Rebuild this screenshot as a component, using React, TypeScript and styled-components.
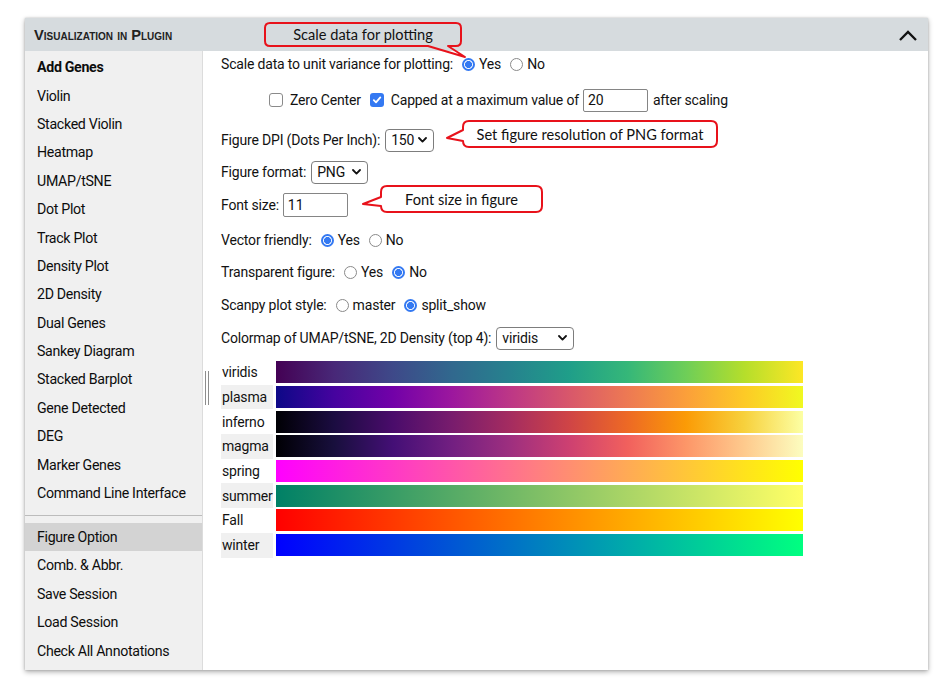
import React from 'react';
import styled, { createGlobalStyle } from 'styled-components';

const Global = createGlobalStyle`
  html, body { margin: 0; padding: 0; background: #ffffff; }
  body { font-family: Roboto, "Liberation Sans", Arial, sans-serif; color: #1b1b1b; }
  * { box-sizing: border-box; }
`;

const Page = styled.div`
  position: relative;
  width: 945px;
  height: 682px;
  padding: 18px 0 0 25px;
`;

const Panel = styled.section`
  width: 903px;
  height: 652px;
  display: flex;
  flex-direction: column;
  background: #fff;
  box-shadow: 0 2px 5px rgba(0, 0, 0, 0.32), 0 0 2px rgba(0, 0, 0, 0.18);
`;

const Header = styled.header`
  flex: none;
  height: 33px;
  background: #d6dbde;
  display: flex;
  align-items: center;
  justify-content: space-between;
  padding: 0 10px 0 9px;
`;

const Title = styled.h2`
  margin: 0;
  font-family: "Liberation Sans", Arial, sans-serif;
  font-weight: bold;
  font-variant: small-caps;
  font-size: 14.7px;
  color: #222;
  letter-spacing: 0;
`;

const Body = styled.div`
  flex: 1;
  display: flex;
  min-height: 0;
`;

const Sidebar = styled.nav`
  flex: none;
  width: 178px;
  background: #f0f0f0;
  border-right: 1px solid #dcdcdc;
  padding-top: 2px;
  display: flex;
  flex-direction: column;
`;

const NavItem = styled.div<{ $active?: boolean; $bold?: boolean }>`
  height: 28.4px;
  display: flex;
  align-items: center;
  padding-left: 12px;
  font-size: 14.2px;
  font-weight: ${p => (p.$bold ? 700 : 400)};
  letter-spacing: -0.32px;
  color: #0d0d0d;
  background: ${p => (p.$active ? '#d3d3d3' : 'transparent')};
`;

const Separator = styled.hr`
  margin: 7.6px 0 7px;
  border: 0;
  height: 1px;
  background: #bcbcbc;
`;

const Main = styled.main`
  position: relative;
  flex: 1;
  padding-left: 18px;
  font-size: 14px;
  letter-spacing: -0.18px;
  color: #121212;
`;

const Grip = styled.div`
  position: absolute;
  left: 2px;
  top: 320px;
  width: 4px;
  height: 34px;
  border-left: 1px solid #8d8d8d;
  border-right: 1px solid #8d8d8d;
`;

const Row = styled.div<{ $mt?: number; $indent?: number }>`
  height: 26px;
  display: flex;
  align-items: center;
  white-space: nowrap;
  margin-top: ${p => p.$mt ?? 0}px;
  padding-left: ${p => p.$indent ?? 0}px;
`;

const Choice = styled.label`
  display: inline-flex;
  align-items: center;
  margin-left: 9px;
`;

const Radio = styled.span<{ $on?: boolean }>`
  display: inline-block;
  width: 13px;
  height: 13px;
  border-radius: 50%;
  margin-right: 4px;
  border: ${p => (p.$on ? '2px solid #3479f2' : '1px solid #8a8a8a')};
  background: ${p =>
    p.$on ? 'radial-gradient(circle, #3479f2 0 3.2px, #ffffff 3.8px)' : '#ffffff'};
`;

const Check = styled.span<{ $on?: boolean }>`
  display: inline-flex;
  align-items: center;
  justify-content: center;
  width: 14px;
  height: 14px;
  border-radius: 3px;
  margin-right: 7px;
  border: ${p => (p.$on ? 'none' : '1px solid #8a8a8a')};
  background: ${p => (p.$on ? '#3479f2' : '#ffffff')};
`;

const Gap = styled.span<{ $w: number }>`
  display: inline-block;
  width: ${p => p.$w}px;
`;

const TextInput = styled.input<{ $w: number; $h: number }>`
  width: ${p => p.$w}px;
  height: ${p => p.$h}px;
  margin: 0 5px 0 4px;
  padding: 0 4px;
  border: 1px solid #858585;
  border-radius: 2px;
  font-family: Roboto, "Liberation Sans", Arial, sans-serif;
  font-size: 14px;
  color: #111;
  background: #fff;
  outline: none;
`;

const SelectBox = styled.div<{ $w: number }>`
  display: inline-flex;
  align-items: center;
  justify-content: space-between;
  width: ${p => p.$w}px;
  height: 23px;
  margin-left: 5px;
  padding: 0 6px 0 5px;
  border: 1px solid #7d7d7d;
  border-radius: 4px;
  background: #fff;
  color: #111;
`;

const ColorTable = styled.div`
  margin-top: 9px;
  display: grid;
  grid-template-columns: 52px 527px;
  grid-auto-rows: 24.7px;
  column-gap: 3px;
`;

const MapLabel = styled.div<{ $shade: boolean }>`
  display: flex;
  align-items: center;
  padding-left: 1px;
  background: ${p => (p.$shade ? '#f0f0f0' : 'transparent')};
`;

const MapBar = styled.div<{ $g: string }>`
  align-self: center;
  height: 22px;
  background: ${p => p.$g};
`;

const CalloutWrap = styled.div<{ $x: number; $y: number; $w: number; $h: number }>`
  position: absolute;
  left: ${p => p.$x}px;
  top: ${p => p.$y}px;
  width: ${p => p.$w}px;
  height: ${p => p.$h}px;
  display: flex;
  align-items: center;
  justify-content: center;
  font-family: Lato, "Open Sans", sans-serif;
  font-size: 14.6px;
  color: #111;
  z-index: 5;
`;

const CalloutShape = styled.svg`
  position: absolute;
  left: 0;
  top: 0;
  overflow: visible;
`;

const CalloutText = styled.span`
  position: relative;
`;

const Chevron = () => (
  <svg width="9" height="6" viewBox="0 0 9 6">
    <polyline points="1,1 4.5,4.6 8,1" fill="none" stroke="#111" strokeWidth="1.8" strokeLinecap="round" strokeLinejoin="round" />
  </svg>
);

const CheckMark = () => (
  <svg width="10" height="10" viewBox="0 0 10 10">
    <polyline points="1.8,5.2 4,7.4 8.3,2.4" fill="none" stroke="#fff" strokeWidth="1.8" strokeLinecap="round" strokeLinejoin="round" />
  </svg>
);

const Callout = ({ x, y, w, h, d, fill, text }: { x: number; y: number; w: number; h: number; d: string; fill: string; text: string }) => (
  <CalloutWrap $x={x} $y={y} $w={w} $h={h}>
    <CalloutShape width={w} height={h}>
      <path d={d} fill={fill} stroke="#e8121b" strokeWidth="2" strokeLinejoin="round" />
    </CalloutShape>
    <CalloutText>{text}</CalloutText>
  </CalloutWrap>
);

const navTop = [
  'Add Genes', 'Violin', 'Stacked Violin', 'Heatmap', 'UMAP/tSNE', 'Dot Plot', 'Track Plot',
  'Density Plot', '2D Density', 'Dual Genes', 'Sankey Diagram', 'Stacked Barplot',
  'Gene Detected', 'DEG', 'Marker Genes', 'Command Line Interface',
];
const navBottom = ['Figure Option', 'Comb. & Abbr.', 'Save Session', 'Load Session', 'Check All Annotations'];

const lg = (stops: string[]) => `linear-gradient(to right, ${stops.join(', ')})`;

const colormaps = [
  { name: 'viridis', g: lg(['#440154', '#482878', '#3e4989', '#31688e', '#26828e', '#1f9e89', '#35b779', '#6ece58', '#b5de2b', '#fde725']) },
  { name: 'plasma', g: lg(['#0d0887', '#46039f', '#7201a8', '#9c179e', '#bd3786', '#d8576b', '#ed7953', '#fb9f3a', '#fdca26', '#f0f921']) },
  { name: 'inferno', g: lg(['#000004', '#1b0c41', '#4a0c6b', '#781c6d', '#a52c60', '#cf4446', '#ed6925', '#fb9b06', '#f7d13d', '#fcffa4']) },
  { name: 'magma', g: lg(['#000004', '#180f3d', '#440f76', '#721f81', '#9e2f7f', '#cd4071', '#f1605d', '#fd9668', '#feca8d', '#fcfdbf']) },
  { name: 'spring', g: lg(['#ff00ff', '#ffff00']) },
  { name: 'summer', g: lg(['#008066', '#ffff66']) },
  { name: 'Fall', g: lg(['#ff0000', '#ffff00']) },
  { name: 'winter', g: lg(['#0000ff', '#00ff80']) },
];

export default function App() {
  return (
    <Page>
      <Global />
      <Panel>
        <Header>
          <Title>Visualization in Plugin</Title>
          <svg width="20" height="12" viewBox="0 0 20 12">
            <polyline points="2,11 10,3 18,11" fill="none" stroke="#111" strokeWidth="2.3" />
          </svg>
        </Header>
        <Body>
          <Sidebar>
            {navTop.map((n, i) => (
              <NavItem key={n} $bold={i === 0}>{n}</NavItem>
            ))}
            <Separator />
            {navBottom.map((n, i) => (
              <NavItem key={n} $active={i === 0}>{n}</NavItem>
            ))}
          </Sidebar>
          <Main>
            <Grip />
            <Row>
              Scale data to unit variance for plotting:
              <Choice><Radio $on />Yes</Choice>
              <Choice><Radio />No</Choice>
            </Row>
            <Row $mt={10} $indent={48}>
              <Check />Zero Center<Gap $w={9} />
              <Check $on><CheckMark /></Check>Capped at a maximum value of
              <TextInput $w={65} $h={23} readOnly value="20" />
              after scaling
            </Row>
            <Row $mt={14}>
              Figure DPI (Dots Per Inch):
              <SelectBox $w={49}>150<Chevron /></SelectBox>
            </Row>
            <Row $mt={6}>
              Figure format:
              <SelectBox $w={57}>PNG<Chevron /></SelectBox>
            </Row>
            <Row $mt={7}>
              Font size:
              <TextInput $w={65} $h={24} readOnly value="11" />
            </Row>
            <Row $mt={9}>
              Vector friendly:
              <Choice><Radio $on />Yes</Choice>
              <Choice><Radio />No</Choice>
            </Row>
            <Row $mt={6}>
              Transparent figure:
              <Choice><Radio />Yes</Choice>
              <Choice><Radio $on />No</Choice>
            </Row>
            <Row $mt={7}>
              Scanpy plot style:
              <Choice><Radio />master</Choice>
              <Choice><Radio $on />split_show</Choice>
            </Row>
            <Row $mt={7}>
              Colormap of UMAP/tSNE, 2D Density (top 4):
              <SelectBox $w={78}>viridis<Chevron /></SelectBox>
            </Row>
            <ColorTable>
              {colormaps.map((m, i) => (
                <React.Fragment key={m.name}>
                  <MapLabel $shade={i % 2 === 1}>{m.name}</MapLabel>
                  <MapBar $g={m.g} />
                </React.Fragment>
              ))}
            </ColorTable>
          </Main>
        </Body>
      </Panel>
      <Callout
        x={264} y={22} w={198} h={25} fill="none" text="Scale data for plotting"
        d="M6,1 H192 Q197,1 197,6 V19 Q197,24 192,24 H184 L201,35 L164,24 H6 Q1,24 1,19 V6 Q1,1 6,1 Z"
      />
      <Callout
        x={462} y={120} w={256} h={28} fill="#ffffff" text="Set figure resolution of PNG format"
        d="M7,1 H249 Q255,1 255,7 V21 Q255,27 249,27 H7 Q1,27 1,21 L-15,18 L1,10 V7 Q1,1 7,1 Z"
      />
      <Callout
        x={380} y={185} w={163} h={28} fill="#ffffff" text="Font size in figure"
        d="M7,1 H156 Q162,1 162,7 V21 Q162,27 156,27 H7 Q1,27 1,21 L-17,19 L1,12 V7 Q1,1 7,1 Z"
      />
    </Page>
  );
}
